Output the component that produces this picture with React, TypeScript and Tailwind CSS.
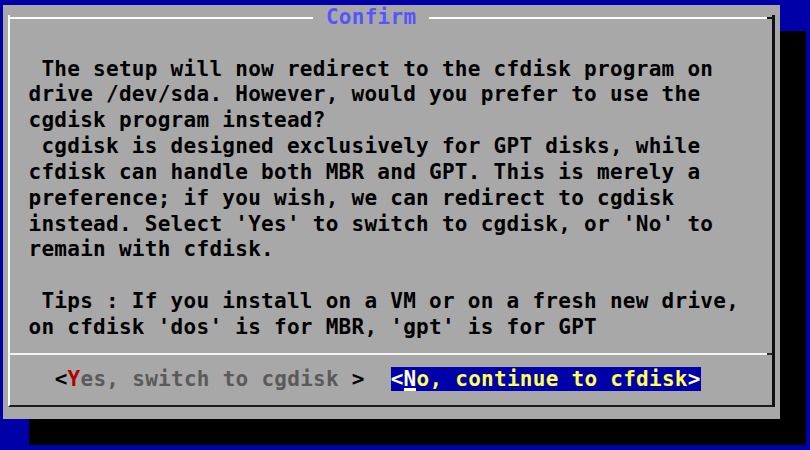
const lines = [
    " The setup will now redirect to the cfdisk program on",
    "drive /dev/sda. However, would you prefer to use the",
    "cgdisk program instead?",
    " cgdisk is designed exclusively for GPT disks, while",
    "cfdisk can handle both MBR and GPT. This is merely a",
    "preference; if you wish, we can redirect to cgdisk",
    "instead. Select 'Yes' to switch to cgdisk, or 'No' to",
    "remain with cfdisk.",
    "",
    " Tips : If you install on a VM or on a fresh new drive,",
    "on cfdisk 'dos' is for MBR, 'gpt' is for GPT",
];

// one text cell of the console: 12.92 x 25.84
const cell = "h-[25.84px] leading-[25.84px]";

export default function App() {
    return (
        <div className="h-[450px] w-[810px] overflow-hidden bg-[#0000a8] pl-[3px] pt-[5px] font-['DejaVu_Sans_Mono',monospace] text-[21px] font-bold tracking-[0.277px] whitespace-pre">
            <div className="h-[414px] w-[777px] bg-[#a8a8a8] pt-[10px] pl-[5px] shadow-[26px_26px_0_0_#000]">
                <div className="flex h-[392px] w-[767px] flex-col border-b-2 border-l-2 border-r-[3px] border-b-[#1c1c1c] border-l-white border-r-[#111]">
                    {/* top edge with title */}
                    <div className={`-mt-[10px] flex items-center ${cell}`}>
                        <div className="h-[2px] w-[303px] bg-white" />
                        <span className="text-[#5555ff]"> Confirm </span>
                        <div className="h-[2px] flex-1 bg-white" />
                        <div className="h-[2px] w-[5px] bg-[#111]" />
                    </div>

                    <div className="mt-[25.84px] pl-[18.5px] text-black">
                        {lines.map((line, i) => (
                            <div key={i} className={cell}>
                                {line}
                            </div>
                        ))}
                    </div>

                    {/* separator */}
                    <div className={`flex items-center ${cell}`}>
                        <div className="h-[2px] flex-1 bg-[#f4f4f4]" />
                        <div className="h-[2px] w-[5px] bg-[#2a2a2a]" />
                    </div>

                    <div className={`pl-[44.7px] ${cell}`}>
                        <span className="text-black">&lt;</span>
                        <span className="text-[#b00000]">Y</span>
                        <span className="text-[#5a5a5a]">es, switch to cgdisk</span>
                        <span className="text-black"> &gt;</span>
                        <span>{"  "}</span>
                        <span className="bg-[#0000aa]">
                            <span className="text-white">&lt;</span>
                            <span className="text-white shadow-[inset_0_-3px_0_#fff]">N</span>
                            <span className="text-[#ffff55]">o, continue to cfdisk</span>
                            <span className="text-white">&gt;</span>
                        </span>
                    </div>
                </div>
            </div>
        </div>
    );
}
